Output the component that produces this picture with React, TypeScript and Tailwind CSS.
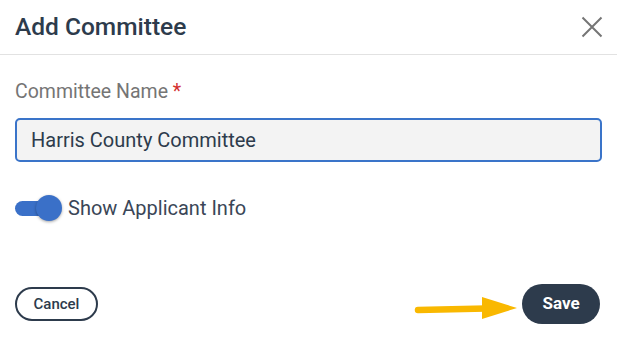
export default function App() {
  return (
    <div className="w-[617px] h-[341px] bg-white font-['Roboto',sans-serif] text-[#2d3b4c] flex flex-col">
      <div className="flex items-center justify-between h-[55px] px-[15px] border-b border-[#e2e2e2]">
        <h2 className="text-[24.5px] font-medium">Add Committee</h2>
        <svg width="22" height="22" viewBox="0 0 22 22" className="-mr-[1px]">
          <path d="M1.5 1.5 L20.5 20.5 M20.5 1.5 L1.5 20.5" stroke="#757575" strokeWidth="2" />
        </svg>
      </div>

      <div className="flex flex-col px-[15px] pt-[25px]">
        <label className="text-[19.5px] text-[#757575] leading-[24px]">
          Committee Name <span className="text-[#d32f2f]">*</span>
        </label>
        <div className="mt-[14px] h-[44px] rounded-[5px] border-2 border-[#3a74c9] bg-[#f3f3f3] flex items-center px-[14px] text-[20px]">
          Harris County Committee
        </div>

        <div className="flex items-center mt-[33px] h-[26px]">
          <div className="relative w-[48px] h-[26px]">
            <div className="absolute left-0 top-[6px] w-[40px] h-[15px] rounded-full bg-[#3a70c8]" />
            <div className="absolute left-[21px] top-0 w-[26px] h-[26px] rounded-full bg-[#3a70c8] shadow-[0_1px_3px_rgba(0,0,0,0.35)]" />
          </div>
          <span className="ml-[5px] text-[20px] text-[#3a4657]">Show Applicant Info</span>
        </div>
      </div>

      <div className="flex items-center justify-between pl-[15px] pr-[17px] mt-[63px]">
        <button className="h-[34px] w-[83px] rounded-full border-2 border-[#2d3b4c] text-[15px] font-medium">
          Cancel
        </button>
        <div className="flex items-center">
          <svg width="104" height="30" viewBox="0 0 104 30" className="mr-[4px] mt-[9px]">
            <line x1="4" y1="16" x2="72" y2="14.5" stroke="#f9b800" strokeWidth="6.5" strokeLinecap="round" />
            <polygon points="68,3 103,14 68,25" fill="#f9b800" />
          </svg>
          <button className="h-[40px] w-[78px] rounded-full bg-[#2d3b4c] text-white text-[17px] font-bold">
            Save
          </button>
        </div>
      </div>
    </div>
  );
}
